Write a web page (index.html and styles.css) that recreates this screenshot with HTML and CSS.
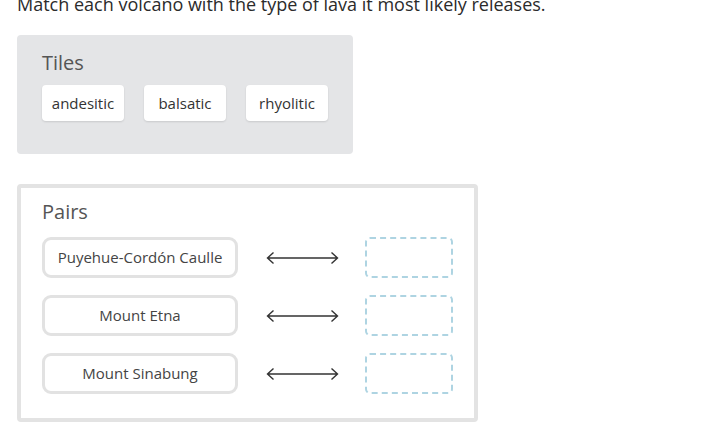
FILE: index.html
```html
<!DOCTYPE html>
<html>
<head>
<meta charset="utf-8">
<link rel="stylesheet" href="styles.css">
</head>
<body>
<p class="prompt">Match each volcano with the type of lava it most likely releases.</p>
<section class="tiles">
  <h2 class="title">Tiles</h2>
  <div class="tile-list">
    <div class="tile">andesitic</div>
    <div class="tile">balsatic</div>
    <div class="tile">rhyolitic</div>
  </div>
</section>
<section class="pairs">
  <h2 class="title">Pairs</h2>
  <div class="rows">
    <div class="row">
      <div class="term">Puyehue-Cordón Caulle</div>
      <svg class="arrow" width="73" height="14" viewBox="0 0 73 14"><path d="M1.5 7H71.5M7.5 1.5L1.5 7L7.5 12.5M65.5 1.5L71.5 7L65.5 12.5" fill="none" stroke="#333" stroke-width="1.4"/></svg>
      <div class="slot"></div>
    </div>
    <div class="row">
      <div class="term">Mount Etna</div>
      <svg class="arrow" width="73" height="14" viewBox="0 0 73 14"><path d="M1.5 7H71.5M7.5 1.5L1.5 7L7.5 12.5M65.5 1.5L71.5 7L65.5 12.5" fill="none" stroke="#333" stroke-width="1.4"/></svg>
      <div class="slot"></div>
    </div>
    <div class="row">
      <div class="term">Mount Sinabung</div>
      <svg class="arrow" width="73" height="14" viewBox="0 0 73 14"><path d="M1.5 7H71.5M7.5 1.5L1.5 7L7.5 12.5M65.5 1.5L71.5 7L65.5 12.5" fill="none" stroke="#333" stroke-width="1.4"/></svg>
      <div class="slot"></div>
    </div>
  </div>
</section>
</body>
</html>
```
FILE: styles.css
```css
html, body {
  margin: 0;
  padding: 0;
  background: #fff;
}
body {
  font-family: "Open Sans", "Noto Sans", sans-serif;
  color: #333;
  padding-left: 17px;
  overflow: hidden;
}
.prompt {
  margin: -8px 0 0 0;
  font-size: 18px;
  line-height: 24px;
  color: #2b2b2b;
}
.title {
  margin: 0;
  font-size: 20px;
  font-weight: 400;
  line-height: 26px;
  color: #555;
}
.tiles {
  margin-top: 19px;
  width: 336px;
  box-sizing: border-box;
  height: 119px;
  background: #e4e5e7;
  border-radius: 4px;
  padding: 15px 25px 0 25px;
}
.tile-list {
  display: flex;
  gap: 20px;
  margin-top: 9px;
}
.tile {
  width: 82px;
  height: 36px;
  box-sizing: border-box;
  background: #fff;
  border-radius: 4px;
  box-shadow: 0 1px 2px rgba(0,0,0,0.12);
  font-size: 15px;
  display: flex;
  align-items: center;
  justify-content: center;
  color: #333;
  padding-bottom: 1px;
}
.pairs {
  margin-top: 30px;
  width: 461px;
  height: 238px;
  box-sizing: border-box;
  border: 4px solid #e3e3e3;
  border-radius: 4px;
  padding: 11px 21px 0 21px;
}
.rows {
  display: flex;
  flex-direction: column;
  gap: 17px;
  margin-top: 12px;
}
.row {
  display: flex;
  align-items: center;
}
.term {
  width: 196px;
  height: 41px;
  box-sizing: border-box;
  border: 3px solid #e2e2e2;
  border-radius: 9px;
  font-size: 15px;
  color: #444;
  display: flex;
  align-items: center;
  justify-content: center;
  padding-bottom: 2px;
}
.arrow {
  margin-left: 28px;
  display: block;
}
.slot {
  margin-left: 26px;
  width: 88px;
  height: 41px;
  box-sizing: border-box;
  border: 2px dashed #aed4e2;
  border-radius: 5px;
}
```
